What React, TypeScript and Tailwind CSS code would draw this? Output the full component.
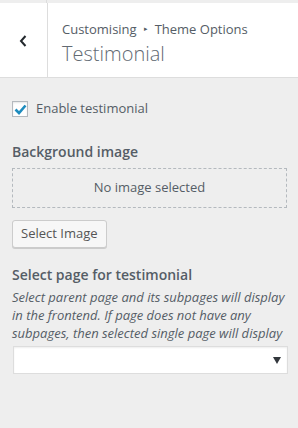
import React from "react";

export default function App() {
  return (
    <div
      className="w-[298px] h-[428px] bg-[#eeeeee] overflow-hidden text-[#555d66]"
      style={{ fontFamily: '"Open Sans", "Noto Sans", sans-serif' }}
    >
      <div className="h-[3px] flex">
        <div className="w-[47px] border-r border-[#dddddd]" />
      </div>
      <div className="h-[75px] bg-white border-b border-[#dddddd] flex">
        <div className="w-[48px] shrink-0 border-r border-[#dddddd] flex items-center justify-center">
          <svg width="10" height="14" viewBox="0 0 10 14" className="ml-[-2px] mt-[2px]">
            <path d="M7.5 2 L3 7 L7.5 12" fill="none" stroke="#23282d" strokeWidth="2" />
          </svg>
        </div>
        <div className="pl-[14px] pt-[16px]">
          <div className="text-[13px] leading-[20px] text-[#555d66] flex items-center">
            <span>Customising</span>
            <span className="text-[7px] mx-[7px] text-[#555d66]">▸</span>
            <span>Theme Options</span>
          </div>
          <div className="text-[20px] leading-[28px] font-light text-[#626a73] mt-[1px]">
            Testimonial
          </div>
        </div>
      </div>

      <div className="px-[12px]">
        <label className="flex items-center mt-[23px] h-[16px]">
          <span className="w-[16px] h-[16px] border border-[#b4b9be] bg-white flex items-center justify-center shadow-[inset_0_1px_2px_rgba(0,0,0,0.1)]">
            <svg width="13" height="11" viewBox="0 0 13 11">
              <path d="M1.5 5.5 L5 9 L11.5 1.5" fill="none" stroke="#1e8cbe" strokeWidth="2.6" />
            </svg>
          </span>
          <span className="ml-[8px] text-[13px] text-[#555d66]">Enable testimonial</span>
        </label>

        <div className="mt-[25px] text-[14px] font-semibold leading-[20px] text-[#555d66]">
          Background image
        </div>
        <div className="mt-[6px] h-[40px] w-[275px] border border-dashed border-[#b4b9be] flex items-center justify-center text-[13px] text-[#555d66]">
          No image selected
        </div>

        <button className="mt-[12px] h-[28px] px-[8px] bg-[#f7f7f7] border border-[#cccccc] rounded-[3px] shadow-[0_1px_0_#cccccc] text-[13px] text-[#555555]">
          Select Image
        </button>

        <div className="mt-[17px] text-[14px] font-semibold leading-[20px] text-[#555d66]">
          Select page for testimonial
        </div>
        <div className="mt-[3px] text-[13px] italic leading-[18px] text-[#555d66]">
          Select parent page and its subpages will display in the frontend. If page does not have any subpages, then selected single page will display
        </div>
        <div className="mt-[4px] ml-[1px] h-[28px] w-[275px] bg-white border border-[#dddddd] shadow-[inset_0_1px_2px_rgba(0,0,0,0.07)] flex items-center justify-end pr-[6px]">
          <svg width="8" height="7" viewBox="0 0 8 7">
            <path d="M0 0 H8 L4 7 Z" fill="#32373c" />
          </svg>
        </div>
      </div>
    </div>
  );
}
